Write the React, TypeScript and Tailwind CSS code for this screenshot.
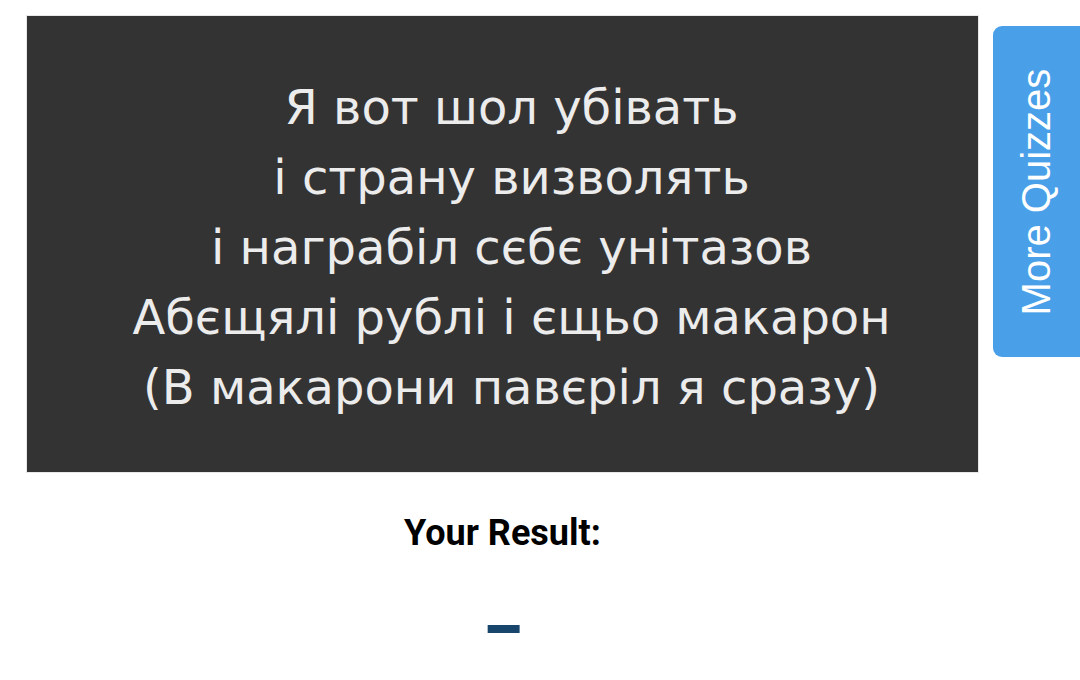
const lines = [
  'Я вот шол убівать',
  'і страну визволять',
  'і награбіл сєбє унітазов',
  'Абєщялі рублі і єщьо макарон',
  '(В макарони павєріл я сразу)',
];

const App = () => {
  return (
    <div className="min-h-[680px] bg-white relative" style={{ fontFamily: 'Roboto, sans-serif' }}>
      <div className="w-[953px] ml-[26px] pt-[15px]">
        <div className="border border-[#e8e8e8] bg-[#333333] h-[458px] pt-[6px] pl-[18px] flex flex-col items-center justify-center">
          {lines.map((l) => (
            <div
              key={l}
              className="text-[48px] leading-[70px] text-[#ececec] whitespace-nowrap"
              style={{ fontFamily: '"DejaVu Sans", sans-serif' }}
            >
              {l}
            </div>
          ))}
        </div>
        <h2 className="mt-[40px] text-center text-[36px] font-bold text-black leading-[40px]">Your Result:</h2>
        <div className="mt-[46px] text-center text-[62px] font-black leading-[60px] text-[#17456b]">–</div>
      </div>
      <a className="absolute right-0 top-[26px] w-[87px] h-[331px] bg-[#4a9fe9] rounded-l-[9px] flex items-center justify-center">
        <span
          className="-rotate-90 whitespace-nowrap text-white text-[40px] leading-none"
          style={{ fontFamily: '"Liberation Sans", Arial, sans-serif' }}
        >
          More Quizzes
        </span>
      </a>
    </div>
  );
};

export default App;
